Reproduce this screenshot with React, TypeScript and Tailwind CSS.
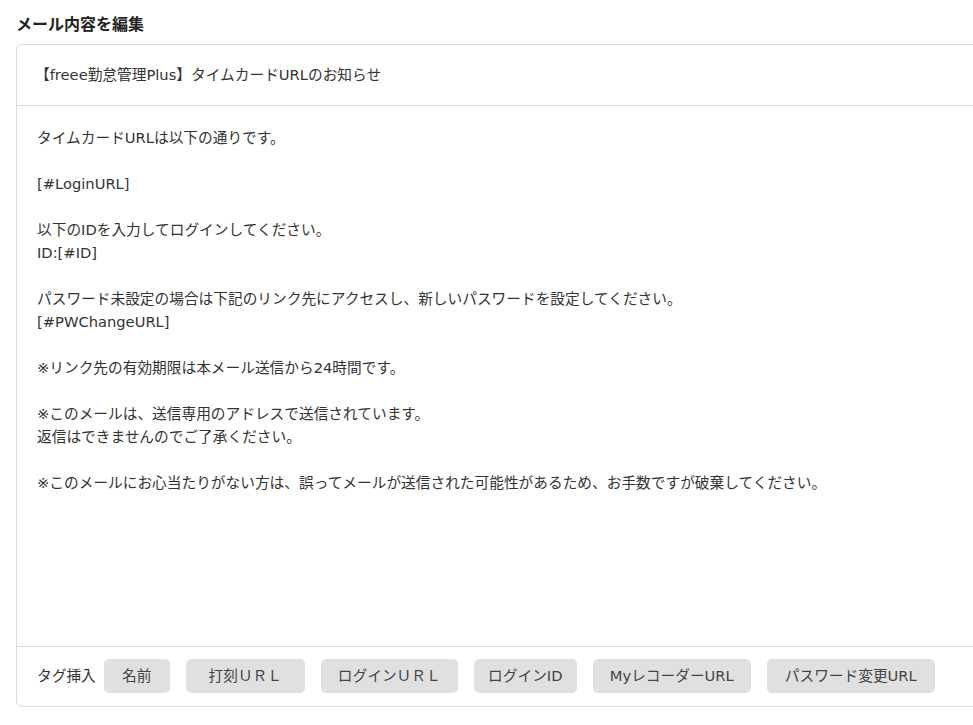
import React from "react";

const lines = [
  "タイムカードURLは以下の通りです。",
  "",
  "[#LoginURL]",
  "",
  "以下のIDを入力してログインしてください。",
  "ID:[#ID]",
  "",
  "パスワード未設定の場合は下記のリンク先にアクセスし、新しいパスワードを設定してください。",
  "[#PWChangeURL]",
  "",
  "※リンク先の有効期限は本メール送信から24時間です。",
  "",
  "※このメールは、送信専用のアドレスで送信されています。",
  "返信はできませんのでご了承ください。",
  "",
  "※このメールにお心当たりがない方は、誤ってメールが送信された可能性があるため、お手数ですが破棄してください。",
];

const tags = [
  { label: "名前", cls: "w-[66px]" },
  { label: "打刻ＵＲＬ", cls: "w-[119px]" },
  { label: "ログインＵＲＬ", cls: "w-[137px]" },
  { label: "ログインID", cls: "w-[103px]" },
  { label: "MyレコーダーURL", cls: "w-[158px]" },
  { label: "パスワード変更URL", cls: "w-[168px]" },
];

export default function App() {
  return (
    <div
      className="w-[973px] h-[725px] overflow-hidden bg-white text-[#333]"
      style={{ fontFamily: '"DejaVu Sans", "Noto Sans CJK JP", sans-serif' }}
    >
      <h2 className="pl-4 pt-[13px] text-[16px] leading-6 font-bold text-[#222]">メール内容を編集</h2>
      <div className="ml-4 mt-[7px] w-[1000px] rounded-md border border-[#dcdcdc]">
        <div className="flex h-[61px] items-center border-b border-[#dcdcdc] px-[18px] text-[14.7px]">
          【freee勤怠管理Plus】タイムカードURLのお知らせ
        </div>
        <div className="h-[540px] px-5 pt-[20px] text-[14.7px] leading-[23px]">
          {lines.map((l, i) => (
            <div key={i} className="h-[23px] whitespace-pre">
              {l}
            </div>
          ))}
        </div>
        <div className="flex items-center gap-4 border-t border-[#dcdcdc] px-5 pt-[12px] pb-[13px] text-[14.7px]">
          <span className="-mr-[8px]">タグ挿入</span>
          {tags.map((t) => (
            <button
              key={t.label}
              className={`${t.cls} flex h-[34px] shrink-0 items-center justify-center whitespace-nowrap rounded-[5px] bg-[#e0e0e0] text-[#444]`}
            >
              {t.label}
            </button>
          ))}
        </div>
      </div>
    </div>
  );
}
